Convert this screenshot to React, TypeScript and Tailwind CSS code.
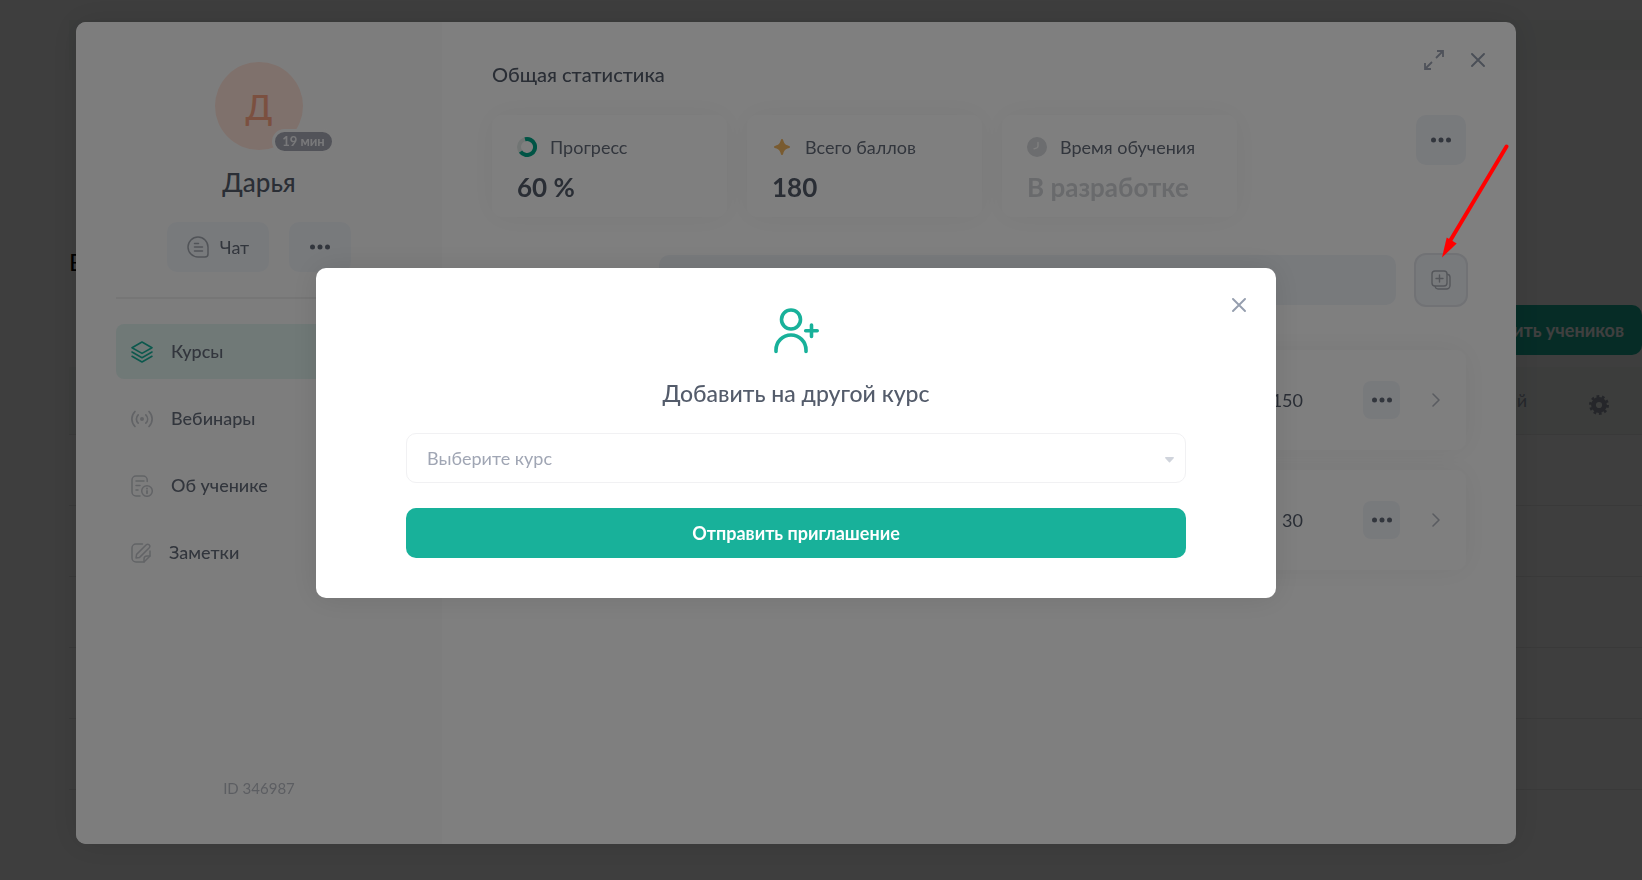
import { useState } from "react"
import type { ReactNode } from "react"

const navItems = [
  { id: "courses", label: "Курсы", icon: <LayersIcon /> },
  { id: "webinars", label: "Вебинары", icon: <BroadcastIcon /> },
  { id: "about", label: "Об ученике", icon: <InfoDocIcon /> },
  { id: "notes", label: "Заметки", icon: <NoteIcon /> },
]

const courses = [
  { id: 1, points: 150 },
  { id: 2, points: 30 },
]

const tableRows = [1, 2, 3, 4, 5]

function LayersIcon() {
  return (
    <svg width="22" height="22" viewBox="0 0 22 22" fill="none" stroke="#18b19a" strokeWidth="1.6" strokeLinejoin="round" strokeLinecap="round">
      <path d="M11 1 21 6.7 11 12.4 1 6.7Z" />
      <path d="M1 11 11 16.7 21 11" />
      <path d="M1 15.3 11 21 21 15.3" />
    </svg>
  )
}

function BroadcastIcon() {
  return (
    <svg width="22" height="22" viewBox="0 0 22 22" fill="none" stroke="#c4c7cc" strokeWidth="1.7" strokeLinecap="round">
      <circle cx="11" cy="11" r="2" fill="#c4c7cc" stroke="none" />
      <path d="M7.2 6.8C4.8 9.2 4.8 12.8 7.2 15.2M14.8 6.8c2.4 2.4 2.4 6 0 8.4" />
      <path d="M4 3.5C-.2 8-.2 14 4 18.5M18 3.5c4.2 4.5 4.2 10.5 0 15" />
    </svg>
  )
}

function InfoDocIcon() {
  return (
    <svg width="22" height="22" viewBox="0 0 22 22" fill="none" stroke="#c4c7cc" strokeWidth="1.5" strokeLinecap="round">
      <path d="M16.2 6.5V5a4 4 0 0 0-4-4H5a4 4 0 0 0-4 4v12a4 4 0 0 0 4 4h4" />
      <path d="M5 6h8M5 10.5h4M5 15h2" />
      <circle cx="16" cy="16" r="5.3" />
      <path d="M16 16v2.3M16 13.5v.2" strokeWidth="1.8" />
    </svg>
  )
}

function NoteIcon() {
  return (
    <svg width="20" height="20" viewBox="0 0 20 20" fill="none" stroke="#c4c7cc" strokeWidth="1.5" strokeLinecap="round" strokeLinejoin="round">
      <path d="M11.5 1H5a4 4 0 0 0-4 4v10a4 4 0 0 0 4 4h8l6-6V8" />
      <path d="M13 19v-3a3 3 0 0 1 3-3h3" />
      <path d="m5 15 .6-3.6L15.3 1.7a1.900 1.900 0 0 1 2.7 0l.3.3a1.900 1.900 0 0 1 0 2.7L8.6 14.4Z" />
    </svg>
  )
}

function ChatIcon() {
  return (
    <svg width="22" height="22" viewBox="0 0 22 22" fill="none" stroke="#a3a8b0" strokeWidth="1.5" strokeLinecap="round">
      <path d="M11 1a10 10 0 0 0 0 20h7a3 3 0 0 0 3-3v-7A10 10 0 0 0 11 1Z" />
      <path d="M7.5 7.5h4M7.5 11h8M7.5 15h8" />
    </svg>
  )
}

function ExpandIcon() {
  return (
    <svg width="20" height="20" viewBox="0 0 20 20" fill="none" stroke="#9ea5b4" strokeWidth="1.8">
      <path d="M12 8 19 1M13 1h6v6" />
      <path d="M8 12 1 19M1 13v6h6" />
    </svg>
  )
}

function CloseIcon() {
  return (
    <svg width="14" height="14" viewBox="0 0 14 14" fill="none" stroke="#959eae" strokeWidth="1.9" strokeLinecap="round">
      <path d="m1 1 12 12M13 1 1 13" />
    </svg>
  )
}

function DotsIcon() {
  return (
    <svg width="20" height="6" viewBox="0 0 20 6" fill="#656c7a">
      <circle cx="2.5" cy="3" r="2.5" />
      <circle cx="10" cy="3" r="2.5" />
      <circle cx="17.5" cy="3" r="2.5" />
    </svg>
  )
}

function ChevronIcon() {
  return (
    <svg width="8" height="14" viewBox="0 0 8 14" fill="none" stroke="#b5b9c2" strokeWidth="1.6" strokeLinecap="round" strokeLinejoin="round">
      <path d="m1 1 6 6-6 6" />
    </svg>
  )
}

function AddCopyIcon() {
  return (
    <svg width="20" height="20" viewBox="0 0 20 20" fill="none" stroke="#a9adb5" strokeWidth="1.4" strokeLinecap="round">
      <rect x="1" y="1" width="15" height="15" rx="3" />
      <path d="M8.5 5v7M5 8.500h7" />
      <path d="M16.500 4.200A3 3 0 0 1 19 7v8.500a3.500 3.500 0 0 1-3.500 3.500H7a3 3 0 0 1-2.800-2.500" />
    </svg>
  )
}

function ProgressIcon() {
  return (
    <svg width="20" height="20" viewBox="0 0 20 20" fill="none" strokeWidth="4">
      <circle cx="10" cy="10" r="8" stroke="#e2ebe8" />
      <path d="M8 2.3A8 8 0 1 1 3.5 14.6" stroke="#00a98a" />
    </svg>
  )
}

function StarIcon() {
  return (
    <svg width="20" height="20" viewBox="0 0 20 20" fill="#f2b661">
      <path d="M10 2c.8 0 1 .6 1.300 1.500.9 3.200 2 4.300 5.200 5.200.9.300 1.500.5 1.500 1.300s-.6 1-1.500 1.300c-3.200.9-4.300 2-5.200 5.200-.3.900-.5 1.500-1.300 1.500s-1-.6-1.300-1.500c-.9-3.200-2-4.300-5.200-5.200C2.600 11 2 10.800 2 10s.6-1 1.500-1.300c3.200-.9 4.300-2 5.200-5.200C9 2.600 9.200 2 10 2Z" />
    </svg>
  )
}

function ClockIcon() {
  return (
    <svg width="20" height="20" viewBox="0 0 20 20" fill="none">
      <circle cx="10" cy="10" r="10" fill="#d8dade" />
      <path d="M11 5.500v3.500a2 2 0 0 1-1.200 1.800l-2.800 1" stroke="#fff" strokeWidth="1.400" strokeLinecap="round" />
    </svg>
  )
}

function GearIcon() {
  return (
    <svg width="20" height="20" viewBox="0 0 20 20" fill="none" stroke="#959ba8">
      <circle cx="10" cy="10" r="5.500" strokeWidth="4.800" />
      <circle cx="10" cy="10" r="8.500" strokeWidth="3" strokeDasharray="2.700 2.640" />
    </svg>
  )
}

function AddUserIcon() {
  return (
    <svg width="46" height="46" viewBox="0 0 46 46" fill="none" stroke="#18b19a" strokeWidth="3.600" strokeLinecap="round">
      <circle cx="18" cy="11.500" r="9.500" />
      <path d="M3 43.500v-1.500a15 15 0 0 1 30 0v1.500" />
      <path d="M38.500 17v11.500M32.700 22.800h11.500" />
    </svg>
  )
}

function StatCard({ icon, label, value, muted }: { icon: ReactNode; label: string; value: string; muted?: boolean }) {
  return (
    <div className="w-[235px] rounded-[10px] bg-white px-[25px] pt-5 pb-[14px] shadow-[0_0_30px_rgba(0,0,0,0.05)]">
      <div className="flex items-center gap-[13px] text-[18px] leading-6 whitespace-nowrap text-[#656c7a]">
        {icon}
        {label}
      </div>
      <p className={`mt-3 text-[26px] leading-8 font-bold ${muted ? "text-[#d3d5d9]" : "text-[#545c6b]"}`}>{value}</p>
    </div>
  )
}

function StudentsPage() {
  return (
    <main className="flex min-h-screen flex-col bg-[#f9f9f9] pt-5 pl-[69px] text-[#545c6b]">
      <div className="h-[50px] bg-[#f0f5f3]" />
      <h1 className="mt-[176px] h-[59px] text-[24px] leading-8 text-black">Все</h1>
      <div className="flex justify-end">
        <button type="button" className="h-[50px] rounded-[10px] bg-[#18b19a] px-[18px] text-[18px] font-bold text-white">
          Пригласить учеников
        </button>
      </div>
      <table className="mt-3 w-full border-b border-[#e6e6e6]">
        <thead>
          <tr className="h-[67px] border-b border-[#e6e6e6] bg-[#f0f5f3]">
            <th className="pr-[62px] text-right text-[18px] font-normal text-[#959eae]">Последний</th>
            <th className="w-[53px] pr-[33px]">
              <button type="button" aria-label="Настройки" className="block pt-[10px]">
                <GearIcon />
              </button>
            </th>
          </tr>
        </thead>
        <tbody>
          {tableRows.map((row) => (
            <tr key={row} className="h-[71px] border-b border-[#e6e6e6]">
              <td />
              <td />
            </tr>
          ))}
        </tbody>
      </table>
    </main>
  )
}

function Sidebar() {
  const [active, setActive] = useState("courses")

  return (
    <aside className="flex w-[366px] shrink-0 flex-col items-center bg-[#fbfbfb] px-10 pt-10 pb-11">
      <div className="relative flex size-[88px] items-center justify-center rounded-full bg-[#ffe2d8] text-[34px] font-medium text-[#f7a081]">
        Д
        <span className="absolute top-[67px] left-[57px] box-content flex h-[19px] w-[57px] items-center justify-center rounded-full border-3 border-[#fbfbfb] bg-[#a4a6b2] text-[13px] leading-none font-bold whitespace-nowrap text-[#f1f1f4]">
          19 мин
        </span>
      </div>
      <h2 className="mt-4 text-[26px] leading-8 font-medium text-[#545c6b]">Дарья</h2>
      <div className="mt-6 flex gap-5">
        <button type="button" className="flex h-[50px] w-[102px] items-center justify-center gap-[11px] rounded-[10px] bg-[#f1f4f9] text-[18px] text-[#656c7a]">
          <ChatIcon />
          Чат
        </button>
        <button type="button" aria-label="Ещё" className="flex h-[50px] w-[62px] items-center justify-center rounded-[10px] bg-[#f1f4f9]">
          <DotsIcon />
        </button>
      </div>
      <nav className="mt-[25px] flex w-full flex-col gap-3 border-t-2 border-[#ececec] pt-[25px]">
        {navItems.map((item) => (
          <button
            key={item.id}
            type="button"
            onClick={() => setActive(item.id)}
            className={`flex h-[55px] items-center gap-[18px] rounded-lg px-[15px] text-[18px] font-medium text-[#656c7a] ${active === item.id ? "bg-[#e1f2ef]" : ""}`}
          >
            {item.icon}
            {item.label}
          </button>
        ))}
      </nav>
      <p className="mt-auto text-[15px] leading-6 text-[#b9bcc4]">ID 346987</p>
    </aside>
  )
}

function StudentDialog() {
  return (
    <div className="fixed inset-0 flex items-center justify-center bg-black/50 pr-[50px] pb-[14px]">
      <section role="dialog" aria-label="Дарья" className="relative flex min-h-[822px] w-full max-w-[1440px] overflow-hidden rounded-[10px] bg-white shadow-[0_0_30px_rgba(0,0,0,0.1)]">
        <Sidebar />
        <div className="min-w-0 flex-1 px-[50px] pt-9">
          <div className="absolute top-7 right-[31px] flex items-center gap-[27px]">
            <button type="button" aria-label="Развернуть">
              <ExpandIcon />
            </button>
            <button type="button" aria-label="Закрыть">
              <CloseIcon />
            </button>
          </div>
          <h3 className="text-[20px] leading-8 font-medium text-[#545c6b]">Общая статистика</h3>
          <div className="mt-[25px] flex gap-5">
            <StatCard icon={<ProgressIcon />} label="Прогресс" value="60 %" />
            <StatCard icon={<StarIcon />} label="Всего баллов" value="180" />
            <StatCard icon={<ClockIcon />} label="Время обучения" value="В разработке" muted />
            <button type="button" aria-label="Ещё" className="ml-auto flex size-[50px] items-center justify-center rounded-[10px] bg-[#f1f4f9]">
              <DotsIcon />
            </button>
          </div>
          <div className="mt-[38px] flex gap-5 pl-[167px]">
            <input type="search" aria-label="Поиск" className="h-[50px] min-w-0 flex-1 rounded-[10px] bg-[#f1f4f9] px-5 outline-none" />
            <button type="button" aria-label="Добавить на другой курс" className="flex size-[50px] items-center justify-center rounded-[10px] bg-[#f1f4f9] ring-2 ring-[#e2e5ea]">
              <AddCopyIcon />
            </button>
          </div>
          <ul className="mt-[45px] flex flex-col gap-5">
            {courses.map((course) => (
              <li key={course.id} className="flex h-[100px] items-center justify-end rounded-[10px] bg-white pr-[26px] shadow-[0_0_30px_rgba(0,0,0,0.06)]">
                <span className="text-[18px] text-[#545c6b]">{course.points}</span>
                <button type="button" aria-label="Ещё" className="mr-8 ml-[60px] flex h-[38px] w-[37px] items-center justify-center rounded-lg bg-[#f1f4f9]">
                  <DotsIcon />
                </button>
                <ChevronIcon />
              </li>
            ))}
          </ul>
        </div>
      </section>
    </div>
  )
}

function AddToCourseDialog() {
  return (
    <div className="fixed inset-0 flex items-center justify-center bg-black/50 pr-[50px] pb-[14px]">
      <form
        role="dialog"
        aria-labelledby="dialog-title"
        onSubmit={(e) => e.preventDefault()}
        className="relative flex w-full max-w-[960px] flex-col items-center rounded-[10px] bg-white px-[90px] py-10 shadow-[0_0_30px_rgba(0,0,0,0.1)]"
      >
        <button type="button" aria-label="Закрыть" className="absolute top-[30px] right-[30px]">
          <CloseIcon />
        </button>
        <AddUserIcon />
        <h2 id="dialog-title" className="mt-[23px] text-[23px] leading-8 font-medium text-[#545c6b]">
          Добавить на другой курс
        </h2>
        <div className="relative mt-6 w-full">
          <select
            aria-label="Выберите курс"
            defaultValue=""
            className="h-[50px] w-full appearance-none rounded-[10px] border border-[#f1f1f3] bg-white px-5 text-[18px] text-[#a0a6b4] outline-none"
          >
            <option value="">Выберите курс</option>
          </select>
          <svg width="9" height="6" viewBox="0 0 9 6" fill="#d0d4dc" className="pointer-events-none absolute top-6 right-3">
            <path d="M.8 0h7.400c.7 0 1 .7.500 1.200L5 5.300c-.3.300-.7.300-1 0L.3 1.200C-.2.700.1 0 .8 0Z" />
          </svg>
        </div>
        <button type="submit" className="mt-[25px] h-[50px] w-full rounded-[10px] bg-[#18b19a] text-[18px] font-bold text-white">
          Отправить приглашение
        </button>
        {/* pointer to the "add to course" button */}
        <svg width="70" height="116" viewBox="0 0 70 116" className="pointer-events-none absolute -top-[124px] left-full ml-[164px]">
          <path d="M66.500 2.500 10 97" stroke="#f00" strokeWidth="4" strokeLinecap="round" />
          <path d="M2 113.500 6.700 93.500 16.700 99.500Z" fill="#f00" />
        </svg>
      </form>
    </div>
  )
}

export default function App() {
  return (
    <div className="font-['Lato','Open_Sans',sans-serif]">
      <StudentsPage />
      <StudentDialog />
      <AddToCourseDialog />
    </div>
  )
}
